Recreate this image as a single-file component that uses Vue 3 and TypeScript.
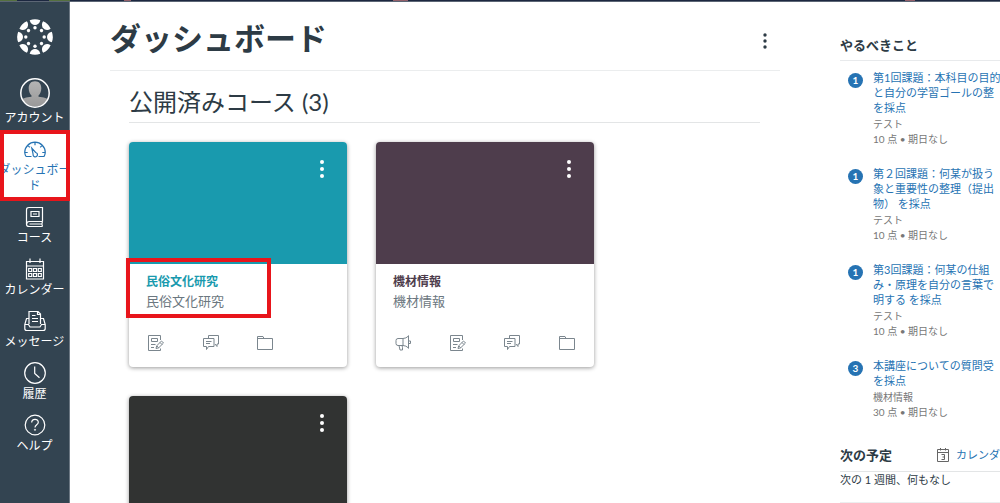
<script setup lang="ts">
interface NavItem {
  label: string
  icon: string
  active?: boolean
}
interface Course {
  name?: string
  tone: string
  links: string[]
  marked?: boolean
}
interface Todo {
  count: number
  lines: string[]
  course: string
  points: number
}

const navItems: NavItem[] = [
  { label: 'ダッシュボード', icon: 'gauge', active: true },
  { label: 'コース', icon: 'book' },
  { label: 'カレンダー', icon: 'calendar' },
  { label: 'メッセージ', icon: 'inbox' },
  { label: '履歴', icon: 'clock' },
  { label: 'ヘルプ', icon: 'help' },
]

const courses: Course[] = [
  { name: '民俗文化研究', tone: 'teal', links: ['課題', 'ディスカッション', 'ファイル'], marked: true },
  { name: '機材情報', tone: 'plum', links: ['アナウンス', '課題', 'ディスカッション', 'ファイル'] },
  { tone: 'ink', links: [] },
]

const todos: Todo[] = [
  { count: 1, lines: ['第1回課題：本科目の目的', 'と自分の学習ゴールの整', 'を採点'], course: 'テスト', points: 10 },
  { count: 1, lines: ['第２回課題：何某が扱う', '象と重要性の整理（提出', '物） を採点'], course: 'テスト', points: 10 },
  { count: 1, lines: ['第3回課題：何某の仕組', 'み・原理を自分の言葉で', '明する を採点'], course: 'テスト', points: 10 },
  { count: 3, lines: ['本講座についての質問受', 'を採点'], course: '機材情報', points: 30 },
]

const angles = [0, 45, 90, 135, 180, 225, 270, 315]
</script>

<template>
  <div class="page">
    <div class="strip"></div>
    <div class="layout">
      <nav class="nav" aria-label="グローバルナビゲーション">
        <a href="#" class="logo" aria-label="ホーム">
          <svg viewBox="0 0 36 36" width="36" height="36" fill="#fff">
            <g v-for="a in angles" :key="a" :transform="`rotate(${a} 18 18)`">
              <path d="M12.700 1.200Q18-.900 23.300 1.200C22.300 7.600 13.700 7.600 12.700 1.200Z" />
              <circle cx="18" cy="8.800" r="1.700" />
            </g>
          </svg>
        </a>
        <a href="#" class="nav-item account">
          <svg viewBox="0 0 30 30" width="30" height="30">
            <defs>
              <clipPath id="avatar-clip"><circle cx="15" cy="15" r="13.6" /></clipPath>
              <linearGradient id="avatar-fill" x1="0" y1="0" x2="0" y2="1">
                <stop offset="0" stop-color="#b4b4b4" />
                <stop offset="1" stop-color="#979797" />
              </linearGradient>
            </defs>
            <g clip-path="url(#avatar-clip)" fill="url(#avatar-fill)">
              <path d="M15 3.2c4.2 0 6.3 2.8 6.3 7 0 3.2-1.2 5.8-2.8 7.4v1.200c5 .6 9.500 1.500 10.500 4V30H1v-7.200c1-2.500 5.500-3.400 10.500-4v-1.200C9.900 16 8.700 13.400 8.700 10.200c0-4.200 2.100-7 6.300-7Z" />
            </g>
            <circle cx="15" cy="15" r="14.2" fill="none" stroke="#fff" stroke-width="1.5" />
          </svg>
          <span>アカウント</span>
        </a>
        <a v-for="item in navItems" :key="item.label" href="#" class="nav-item" :class="{ active: item.active }">
          <svg viewBox="0 0 22 22" width="22" height="22" fill="none" stroke="currentColor" stroke-width="1.2">
            <template v-if="item.icon === 'gauge'">
              <path d="M2 18.5A10.4 10.4 0 0 1 .7 14.5a10.3 10.3 0 0 1 20.6 0 10.4 10.4 0 0 1-1.300 4h-5.500M2 18.5h5.500M11 4.200v3M3.800 7.300l2 2M18.200 7.300l-2 2M.7 14.5h3M21.300 14.5h-3" />
              <path d="M7.8 10.2l3.800 4.300a2.200 2.200 0 1 1-2.500 1.700Z" />
            </template>
            <template v-else-if="item.icon === 'book'">
              <path d="M18.500 15.500V1.500H5Q2.500 1.500 2.500 3.700v14.500Q2.500 20.500 5.300 20.500h13.200M18.500 15.500H5.300a2.600 2.600 0 0 0-2.600 2.500M18.500 15.500q-1.200 2.500 0 5M5.500 18h12" />
              <path d="M7 5.500h8v5H7zM9 8h4" />
            </template>
            <template v-else-if="item.icon === 'calendar'">
              <path d="M2.500 3.500h17v17.500h-17zM2.500 8h17M6 .500v4.500M16 .500v4.500" />
              <path d="M4.700 10.500h3v3h-3zM9.500 10.500h3v3h-3zM14.300 10.500h3v3h-3zM4.700 15.500h3v3h-3zM9.500 15.500h3v3h-3zM14.300 15.500h3v3h-3z" />
            </template>
            <template v-else-if="item.icon === 'inbox'">
              <path d="M5 14V1.500h9l2.500 2.500V14M13.500 1.500v3h3M8 5.500h3.500M8 8.500h6M8 11.500h6" />
              <path d="M5 8.500H2.500L.8 14.500v4q0 2 2 2h16.400q2 0 2-2v-4l-1.700-6h-3M.8 14.500h3.700l1.500 2.500h10l1.500-2.500h3.700" />
            </template>
            <template v-else-if="item.icon === 'clock'">
              <circle cx="11" cy="11" r="10.3" />
              <path d="M10.700 4.500v7l4.800 4.200" />
            </template>
            <template v-else>
              <circle cx="11" cy="11" r="9.8" />
              <path d="M7.700 8.600c0-4.300 6.600-4.300 6.600-.3 0 2.500-3.300 2.500-3.300 5.200" />
              <circle cx="11" cy="15.800" r=".7" fill="currentColor" stroke-width=".5" />
            </template>
          </svg>
          <span>{{ item.label }}</span>
        </a>
      </nav>

      <main class="main">
        <header class="title-bar">
          <h1>ダッシュボード</h1>
          <button type="button" class="kebab" aria-label="ダッシュボードのオプション">
            <svg viewBox="0 0 6 18" width="6" height="18" fill="currentColor">
              <circle cx="3" cy="3" r="1.7" /><circle cx="3" cy="9" r="1.7" /><circle cx="3" cy="15" r="1.7" />
            </svg>
          </button>
        </header>
        <section class="published">
          <h2>公開済みコース (3)</h2>
          <div class="cards">
            <article v-for="course in courses" :key="course.tone" class="card" :class="course.tone">
              <div class="hero">
                <button type="button" class="kebab" aria-label="コースのオプション">
                  <svg viewBox="0 0 6 20" width="6" height="20" fill="currentColor">
                    <circle cx="3" cy="3" r="2" /><circle cx="3" cy="10" r="2" /><circle cx="3" cy="17" r="2" />
                  </svg>
                </button>
              </div>
              <div v-if="course.name" class="info">
                <h3><a href="#">{{ course.name }}</a></h3>
                <p>{{ course.name }}</p>
                <div v-if="course.marked" class="marker"></div>
              </div>
              <div class="links">
                <a v-for="link in course.links" :key="link" href="#" :aria-label="link">
                  <svg viewBox="0 0 16 16" width="16" height="16" fill="none" stroke="currentColor">
                    <template v-if="link === 'アナウンス'">
                      <path d="M3 3.500h5q3 0 5.500-2.500v12q-2.500-2.500-5.500-2.500H3A2 2 0 0 1 1 8.500V5.500q0-2 2-2ZM8 3.500v7M13.500 .500v13M13.500 6h2v2.500h-2M4 10.500l1 4.500h2.500v-2.500l-.500-2" />
                    </template>
                    <template v-else-if="link === '課題'">
                      <path d="M12.500 5V.500h-12v15h12v-2M3.500 3.500h6v3h-6zM3 9.500h4.500M3 12.500h3" />
                      <path d="M8 13.500l.7-2.700 4.800-4.800 2 2-4.800 4.800ZM12 7.500l2 2M8.700 10.800l2 2" />
                    </template>
                    <template v-else-if="link === 'ディスカッション'">
                      <path d="M5.500 3.500v-3h10v8.500h-1.500v2.500l-2-2.500" />
                      <path d="M.5 3.500h10.500v8H5.500L3.500 14.500v-3h-3ZM3 6.500h5.500M3 8.500h4" />
                    </template>
                    <path v-else d="M.5 14.500v-13h5.500l1 2h8.500v11ZM.5 3.500h6.500" />
                  </svg>
                </a>
              </div>
            </article>
          </div>
        </section>
      </main>

      <aside class="side">
        <h2>やるべきこと</h2>
        <ul>
          <li v-for="todo in todos" :key="todo.lines[0]">
            <span class="count">{{ todo.count }}</span>
            <div>
              <a href="#"><span v-for="line in todo.lines" :key="line">{{ line }}</span></a>
              <p>{{ todo.course }}</p>
              <p>{{ todo.points }} 点 • 期日なし</p>
            </div>
          </li>
        </ul>
        <div class="coming">
          <h2>次の予定</h2>
          <a href="#">
            <svg viewBox="0 0 12 14" width="12" height="14" fill="none" stroke="#666">
              <path d="M.5 1.500h11v12H.5zM.5 4.500h11M3.500 0v2.500M8.500 0v2.500" />
              <path d="M4.500 6.500h3v5h-3M5.500 9h2" />
            </svg>
            カレンダー
          </a>
        </div>
        <p class="empty">次の 1 週間、何もなし</p>
      </aside>
    </div>
  </div>
</template>

<style>
body {
  margin: 0;
  background: #fff;
}
</style>

<style scoped>
.page {
  height: 100vh;
  overflow: hidden;
  display: flex;
  flex-direction: column;
  color: #2d3b45;
  font-family: Lato, 'Noto Sans CJK JP', sans-serif;
}
h1, h2, h3, p, ul {
  margin: 0;
  padding: 0;
}
a {
  color: inherit;
  text-decoration: none;
}
svg {
  display: block;
  flex: none;
}
.strip {
  flex: none;
  height: 1px;
  border-bottom: 1px solid #5c6675;
  background: linear-gradient(90deg, #55703f 17px, #1c2740 17px 49px, #55703f 49px 70px, #1c2740 70px 124px, #93606a 124px 131px, #1c2740 131px 393px, #93606a 393px 408px, #1c2740 408px 905px, #93606a 905px 915px, #1c2740 915px);
}
.layout {
  flex: 1;
  display: flex;
  min-height: 0;
}
.nav {
  flex: none;
  width: 69px;
  border-right: 1px solid #6c7883;
  background: #334451;
  color: #fff;
}
.logo {
  display: flex;
  justify-content: center;
  padding: 17px 0 15px;
}
.nav-item {
  position: relative;
  display: flex;
  flex-direction: column;
  align-items: center;
  padding: 6px 0;
  font-size: 12px;
  line-height: 16px;
  text-align: center;
}
.nav-item svg {
  margin-bottom: 2px;
}
.account {
  padding-top: 8px;
}
.active {
  background: #fff;
  color: #2673b3;
}
.active span {
  width: 72px;
}
.active::after {
  content: '';
  position: absolute;
  inset: -2px -1px -1px 0;
  border: 4px solid #e8151b;
}
.main {
  flex: 1;
  min-width: 0;
  padding: 0 60px 0 40px;
}
.title-bar {
  display: flex;
  justify-content: space-between;
  align-items: center;
  height: 68px;
  border-bottom: 1px solid #ebedee;
  padding: 0 12px 0 0;
}
.kebab {
  border: 0;
  background: none;
  padding: 0;
  color: inherit;
}
.title-bar .kebab {
  margin-top: 10px;
}
h1 {
  font-size: 31px;
  line-height: 40px;
  padding-top: 4px;
}
.published {
  padding: 0 20px 0 19px;
}
.published h2 {
  padding: 13px 0 3px;
  border-bottom: 1px solid #e3e5e6;
  font-size: 24px;
  font-weight: 400;
  line-height: 35px;
}
.cards {
  display: flex;
  flex-wrap: wrap;
  gap: 29px;
  padding-top: 19px;
}
.card {
  width: 218px;
  border-radius: 4px;
  background: #fff;
  box-shadow: 0 1px 4px rgba(0, 0, 0, 0.4);
}
.hero {
  display: flex;
  justify-content: flex-end;
  align-items: flex-start;
  height: 122px;
  box-sizing: border-box;
  padding: 17px 22px 0 0;
  border-radius: 4px 4px 0 0;
  color: #fff;
}
.teal .hero { background: #199aae; }
.plum .hero { background: #4e3d4c; }
.ink .hero { background: #313332; }
.teal h3 { color: #199aae; }
.plum h3 { color: #4e3d4c; }
.info {
  position: relative;
  padding: 9px 17px 0;
}
.info h3 {
  font-size: 12px;
  line-height: 18px;
}
.info p {
  color: #6b7780;
  font-size: 13px;
  line-height: 20px;
}
.marker {
  position: absolute;
  left: -3px;
  top: -6px;
  width: 137px;
  height: 52px;
  border: 4px solid #e8151b;
}
.links {
  display: grid;
  grid-template-columns: repeat(4, 1fr);
  justify-items: center;
  padding: 24px 0 16px;
  color: #7b868e;
}
.side {
  flex: none;
  width: 160px;
  overflow: hidden;
  white-space: nowrap;
}
.side h2 {
  font-size: 13px;
  line-height: 20px;
}
.side > h2 {
  padding: 33px 0 5px;
  border-bottom: 1px solid #e8eaec;
}
.side ul {
  display: flex;
  flex-direction: column;
  gap: 19px;
  padding: 9px 0 0 8px;
  list-style: none;
}
.side li {
  display: flex;
  align-items: flex-start;
  gap: 10px;
}
.count {
  flex: none;
  width: 15px;
  margin-top: 3px;
  border-radius: 8px;
  background: #2673b3;
  color: #fff;
  font-size: 10px;
  font-weight: 700;
  line-height: 15px;
  text-align: center;
}
.side li a {
  display: block;
  padding-bottom: 2px;
  color: #2673b3;
  font-size: 11px;
  line-height: 15px;
}
.side li a span {
  display: block;
}
.side li p {
  color: #777;
  font-size: 10px;
  line-height: 15px;
}
.coming {
  display: flex;
  align-items: center;
  gap: 45px;
  padding: 25px 0 6px;
  border-bottom: 1px solid #e3e5e6;
}
.coming a {
  display: flex;
  align-items: center;
  gap: 7px;
  color: #2673b3;
  font-size: 11px;
  line-height: 16px;
}
.empty {
  padding-bottom: 14px;
  border-bottom: 1px solid #eceeef;
  font-size: 11px;
  line-height: 16px;
}
</style>
